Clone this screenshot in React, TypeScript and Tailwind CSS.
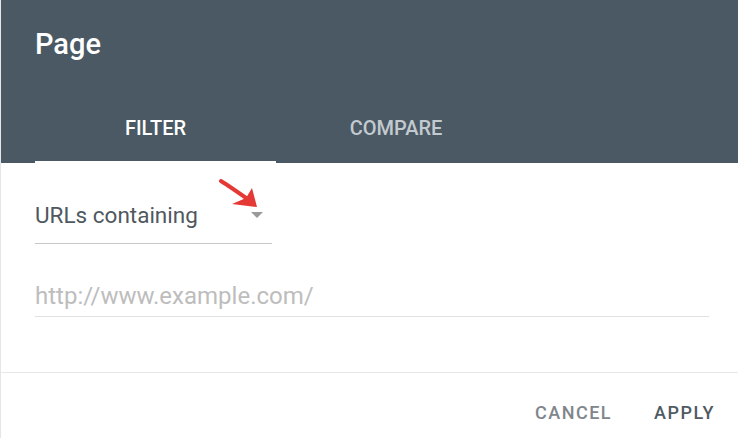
import React from "react";

export default function App() {
  return (
    <div
      className="w-[738px] h-[438px] bg-white flex flex-col relative border-l border-[#e6e6e6] overflow-hidden"
      style={{ fontFamily: "Roboto, 'Liberation Sans', sans-serif" }}
    >
      <div className="h-[163px] bg-[#4a5964] flex flex-col shrink-0">
        <div className="pl-[34px] pt-[27px] text-[29px] leading-[34px] font-medium text-white">
          Page
        </div>
        <div className="mt-auto flex pl-[34px]">
          <div className="w-[241px] flex flex-col">
            <div className="h-[66px] flex items-center justify-center text-[20px] leading-[24px] font-medium text-white">
              FILTER
            </div>
            <div className="h-[2px] bg-white" />
          </div>
          <div className="w-[240px] flex flex-col">
            <div className="h-[66px] flex items-center justify-center text-[20px] leading-[24px] font-medium text-[#c3cacf]">
              COMPARE
            </div>
            <div className="h-[2px]" />
          </div>
        </div>
      </div>

      <div className="flex flex-col pl-[34px] pt-[39px]">
        <div className="w-[237px] flex items-center justify-between pb-[15px] border-b border-[#c8c8c8]">
          <span className="text-[22.5px] leading-[26px] text-[#50585f]">URLs containing</span>
          <svg width="12" height="6" viewBox="0 0 12 6" className="mr-[9px]">
            <path d="M0 0 L12 0 L6 6 Z" fill="#9a9a9a" />
          </svg>
        </div>
        <div className="w-[674px] mt-[39px] pb-[5px] border-b border-[#e2e2e2]">
          <span className="text-[24px] leading-[26px] text-[#bdbdbd]">http://www.example.com/</span>
        </div>
      </div>

      <div className="mt-[55px] border-t border-[#e8e8e8] flex justify-end items-start pt-[29px] pr-[23px] gap-[42px]">
        <span className="text-[18px] leading-[22px] font-medium tracking-[1.5px] text-[#80868b]">CANCEL</span>
        <span className="text-[18px] leading-[22px] font-medium tracking-[1.5px] text-[#4f5a63]">APPLY</span>
      </div>

      <svg
        className="absolute left-[218px] top-[178px]"
        width="44"
        height="34"
        viewBox="0 0 44 34"
      >
        <path d="M2 3 C 10 8, 20 15, 30 22" stroke="#e53935" strokeWidth="4" fill="none" strokeLinecap="round" />
        <path d="M13 26 L27 20 L33 10 L38 29 Z" fill="#e53935" />
      </svg>
    </div>
  );
}
